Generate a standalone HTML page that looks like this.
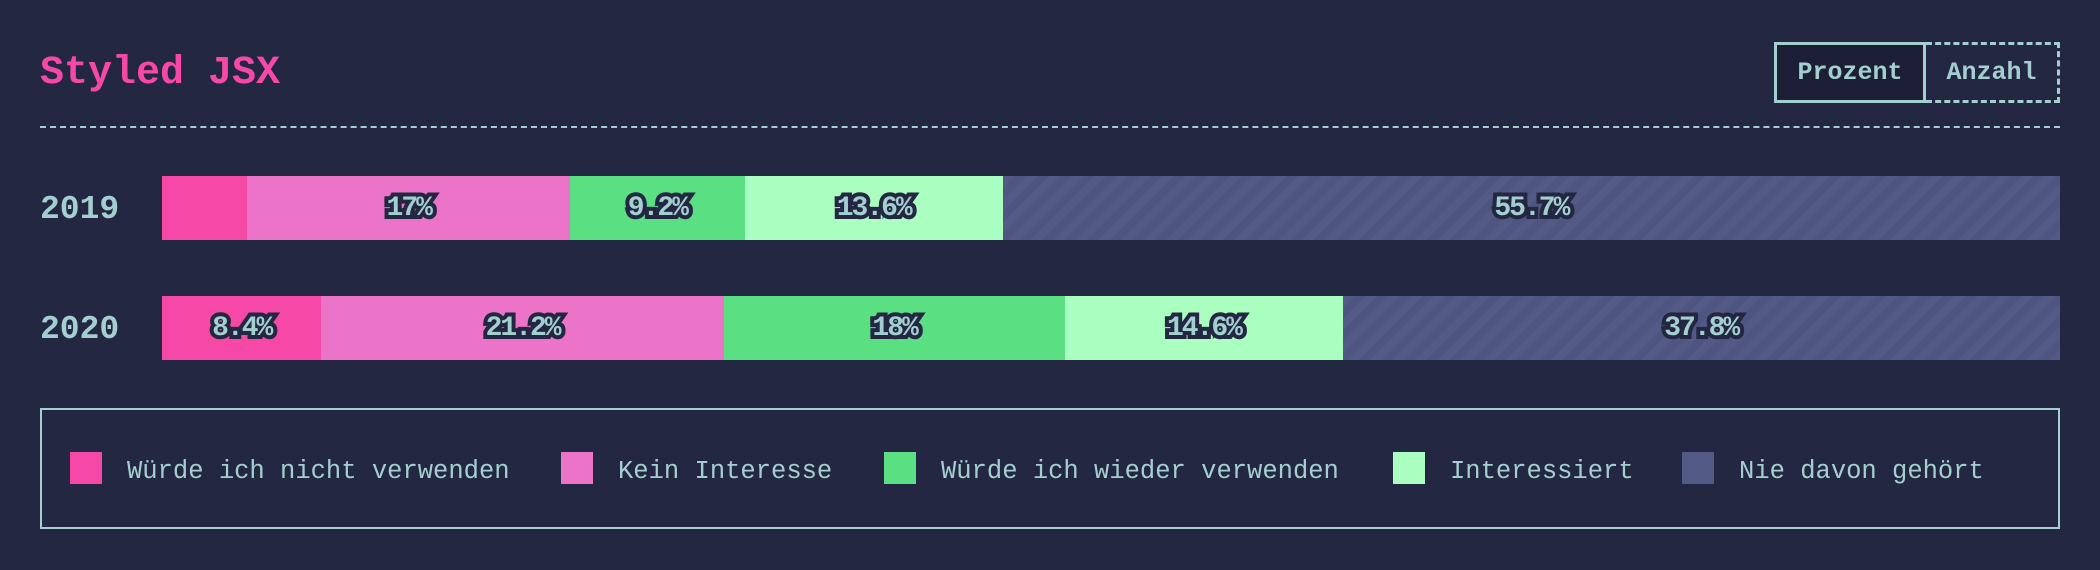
<!DOCTYPE html>
<html><head><meta charset="utf-8"><style>
body{margin:0;width:2100px;height:570px;background:#232741;position:relative;overflow:hidden;font-family:"Liberation Mono",monospace;}
.title{position:absolute;left:40px;top:48px;font-size:40px;font-weight:bold;color:#f649a7;line-height:52px;}
.btns{position:absolute;left:1774px;top:42px;width:286px;height:61px;display:flex;}
.btn{box-sizing:border-box;height:61px;display:flex;align-items:center;justify-content:center;font-size:25px;font-weight:bold;color:#a3cfd0;}
.b1{width:152px;border:3px solid #a3cfd0;background:#1c1f35;}
.b2{width:134px;border:3px dashed #a3cfd0;border-left:none;}
.hr{position:absolute;left:40px;top:126px;width:2020px;border-top:2px dashed #a3cfd0;}
.year{position:absolute;left:40px;font-size:33px;font-weight:bold;color:#a3cfd0;line-height:64px;}
.bar{position:absolute;left:162px;width:1898px;height:64px;display:flex;}
.bar div{height:64px;display:flex;align-items:center;justify-content:center;font-size:28px;font-weight:bold;color:#a3cfd0;letter-spacing:-2px;
 -webkit-text-stroke:8px #232741;paint-order:stroke fill;}
.c1{background:#f649a7}.c2{background:#eb74c8}.c3{background:#5adf82}.c4{background:#aaffc0}
.c5{background:repeating-linear-gradient(-45deg,#535a86 0 8px,#4e5580 8px 16px)}
.legend{position:absolute;left:40px;top:408px;width:2020px;height:121px;box-sizing:border-box;border:2px solid #a3cfd0;}
.sq{position:absolute;top:452px;width:32px;height:32px;}
.lt{position:absolute;top:456px;line-height:32px;font-size:25.5px;color:#a3cfd0;}
</style></head><body>
<div class="title">Styled JSX</div>
<div class="btns"><div class="btn b1">Prozent</div><div class="btn b2">Anzahl</div></div>
<div class="hr"></div>
<div class="year" style="top:178px">2019</div>
<div class="bar" style="top:176px">
<div class="c1" style="width:4.5%"></div>
<div class="c2" style="width:17%">17%</div>
<div class="c3" style="width:9.2%">9.2%</div>
<div class="c4" style="width:13.6%">13.6%</div>
<div class="c5" style="width:55.7%">55.7%</div>
</div>
<div class="year" style="top:298px">2020</div>
<div class="bar" style="top:296px">
<div class="c1" style="width:8.4%">8.4%</div>
<div class="c2" style="width:21.2%">21.2%</div>
<div class="c3" style="width:18%">18%</div>
<div class="c4" style="width:14.6%">14.6%</div>
<div class="c5" style="width:37.8%">37.8%</div>
</div>
<div class="legend"></div>
<div class="sq c1" style="left:70px"></div><div class="lt" style="left:127px">Würde ich nicht verwenden</div>
<div class="sq c2" style="left:561px"></div><div class="lt" style="left:618px">Kein Interesse</div>
<div class="sq c3" style="left:884px"></div><div class="lt" style="left:941px">Würde ich wieder verwenden</div>
<div class="sq c4" style="left:1393px"></div><div class="lt" style="left:1450px">Interessiert</div>
<div class="sq" style="left:1682px;background:#535a86"></div><div class="lt" style="left:1739px">Nie davon gehört</div>
</body></html>
